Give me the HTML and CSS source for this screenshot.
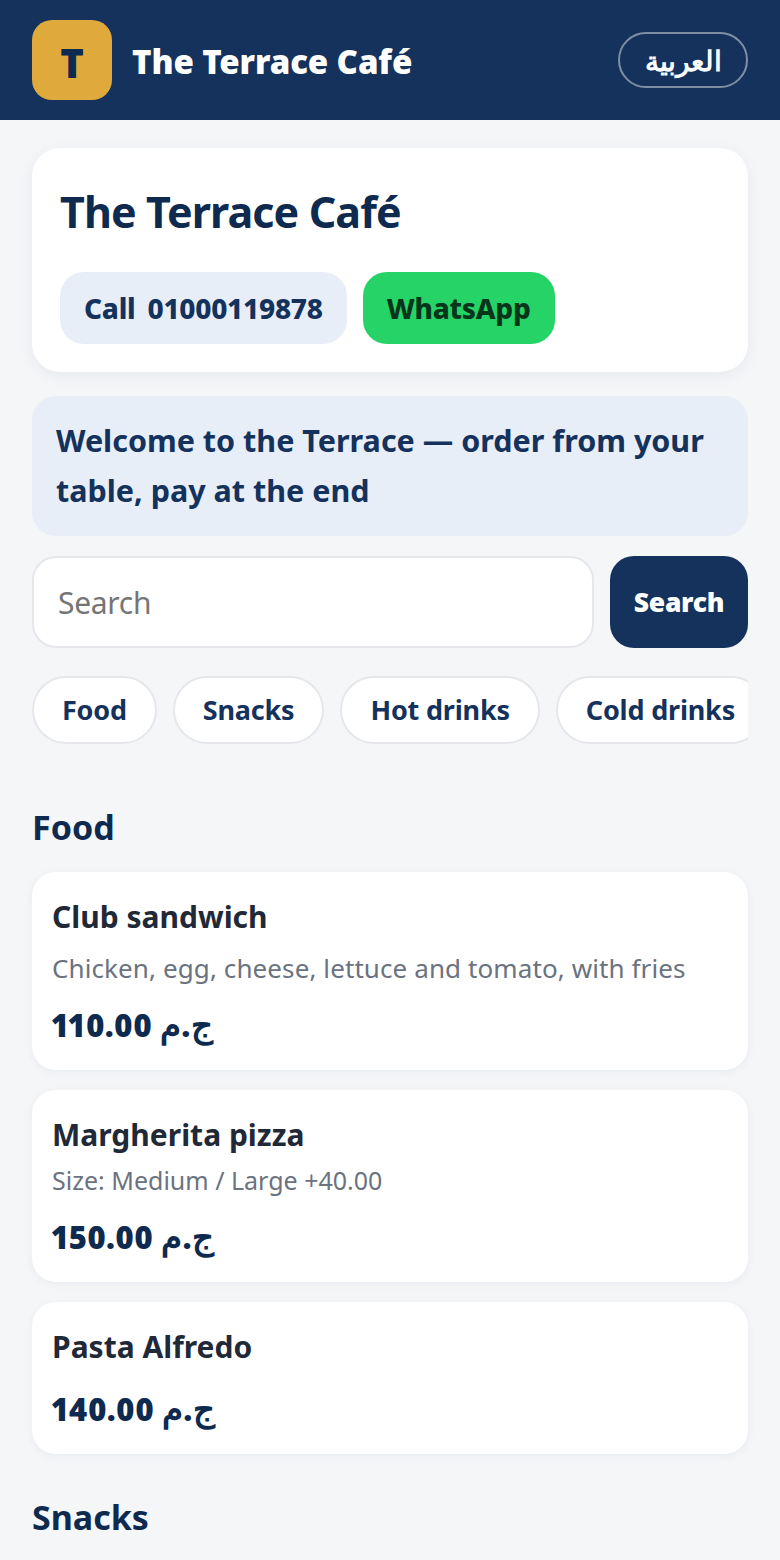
FILE: index.html
```html
<!DOCTYPE html>
<html lang="en">
<head>
  <title>The Terrace Café</title>
  <meta name="viewport" content="width=device-width, initial-scale=1.0">
  <link rel="stylesheet" href="styles.css">
</head>
<body>
  <header class="topbar">
    <div class="brand">
      <div class="logo">T</div>
      <div class="brand-name">The Terrace Café</div>
    </div>
    <a class="lang" href="#">العربية</a>
  </header>

  <main class="page">
    <section class="hero">
      <h1>The Terrace Café</h1>
      <div class="hero-actions">
        <a class="action action-call" href="#"><span>Call</span><span>01000119878</span></a>
        <a class="action action-whatsapp" href="#">WhatsApp</a>
      </div>
    </section>

    <div class="notice">Welcome to the Terrace — order from your table, pay at the end</div>

    <form class="search">
      <input type="text" placeholder="Search">
      <button type="button">Search</button>
    </form>

    <nav class="chips">
      <a class="chip" href="#">Food</a>
      <a class="chip" href="#">Snacks</a>
      <a class="chip" href="#">Hot drinks</a>
      <a class="chip" href="#">Cold drinks</a>
    </nav>

    <h2 class="section-title first">Food</h2>
    <div class="items">
      <article class="item">
        <div class="item-name">Club sandwich</div>
        <div class="item-desc">Chicken, egg, cheese, lettuce and tomato, with fries</div>
        <div class="item-price">110.00 <span class="currency">ج.م</span></div>
      </article>
      <article class="item">
        <div class="item-name">Margherita pizza</div>
        <div class="item-size">Size: Medium / Large +40.00</div>
        <div class="item-price">150.00 <span class="currency">ج.م</span></div>
      </article>
      <article class="item">
        <div class="item-name">Pasta Alfredo</div>
        <div class="item-price">140.00 <span class="currency">ج.م</span></div>
      </article>
    </div>

    <h2 class="section-title">Snacks</h2>
  </main>
</body>
</html>
```

FILE: styles.css
```css
* {
  box-sizing: border-box;
}
html, body {
  height: 1560px;
  overflow: hidden;
}
body {
  margin: 0;
  background: #f4f6f8;
  font-family: "Noto Sans", "Open Sans", sans-serif;
  color: #1f2937;
}
a {
  text-decoration: none;
}
.topbar {
  height: 120px;
  padding: 0 32px;
  background: #14325c;
  display: flex;
  align-items: center;
  justify-content: space-between;
}
.brand {
  display: flex;
  align-items: center;
  gap: 20px;
}
.logo {
  width: 80px;
  height: 80px;
  padding-top: 4px;
  border-radius: 20px;
  background: #e0a93b;
  color: #0f2a4f;
  font-size: 40px;
  font-weight: 900;
  display: flex;
  align-items: center;
  justify-content: center;
}
.brand-name {
  padding-top: 2px;
  color: #fff;
  font-size: 33px;
  font-weight: 900;
  letter-spacing: -0.1px;
}
.lang {
  width: 130px;
  height: 56px;
  border: 2px solid rgba(255,255,255,0.45);
  border-radius: 28px;
  color: #fff;
  font-size: 28px;
  font-weight: 600;
  display: flex;
  align-items: center;
  justify-content: center;
}
.page {
  padding: 28px 32px 0;
}
.hero {
  height: 224px;
  padding: 28px;
  background: #fff;
  border-radius: 28px;
  box-shadow: 0 4px 16px rgba(15,42,79,0.06);
}
.hero h1 {
  margin: 0;
  height: 96px;
  line-height: 72px;
  font-size: 43px;
  font-weight: 700;
  letter-spacing: -0.9px;
  color: #0f2a4f;
}
.hero-actions {
  display: flex;
  gap: 16px;
}
.action {
  height: 72px;
  padding: 0 24px;
  border-radius: 24px;
  font-size: 28px;
  font-weight: 800;
  letter-spacing: -0.25px;
  display: flex;
  align-items: center;
  gap: 12px;
}
.action-call {
  background: #e8eef7;
  color: #14325c;
}
.action-whatsapp {
  background: #25d366;
  color: #06351b;
}
.notice {
  margin-top: 24px;
  padding: 19px 24px;
  height: 140px;
  border-radius: 24px;
  background: #e8eef7;
  color: #14325c;
  font-size: 30.5px;
  font-weight: 700;
  line-height: 50px;
}
.search {
  margin-top: 20px;
  display: flex;
  gap: 16px;
}
.search input {
  flex: 1;
  min-width: 0;
  height: 92px;
  padding: 0 24px;
  border: 2px solid #e5e7eb;
  border-radius: 24px;
  background: #fff;
  font-family: inherit;
  font-size: 30px;
  letter-spacing: -0.3px;
  outline: none;
}
.search button {
  width: 138px;
  height: 92px;
  border: none;
  border-radius: 24px;
  background: #14325c;
  color: #fff;
  font-family: inherit;
  font-size: 26.5px;
  font-weight: 900;
  letter-spacing: -0.3px;
}
.chips {
  margin-top: 28px;
  display: flex;
  gap: 16px;
  overflow: hidden;
}
.chip {
  flex: none;
  height: 68px;
  padding: 0 28px 2px;
  border: 2px solid #e5e7eb;
  border-radius: 34px;
  background: #fff;
  color: #14325c;
  font-size: 27px;
  font-weight: 700;
  letter-spacing: -0.2px;
  display: flex;
  align-items: center;
}
.section-title {
  margin: 40px 0 22px;
  font-size: 34px;
  font-weight: 700;
  line-height: 46px;
  color: #0f2a4f;
}
.section-title.first {
  margin-top: 60px;
}
.items {
  display: flex;
  flex-direction: column;
  gap: 20px;
}
.item {
  padding: 20px;
  background: #fff;
  border-radius: 24px;
  box-shadow: 0 2px 10px rgba(15,42,79,0.05);
}
.item-name {
  padding-bottom: 1px;
  font-size: 30px;
  font-weight: 700;
  line-height: 49px;
  color: #1f2937;
}
.item-desc {
  margin-top: 6px;
  font-size: 26px;
  letter-spacing: 0.1px;
  line-height: 40px;
  color: #6b7280;
}
.item-size {
  font-size: 25px;
  line-height: 40px;
  color: #6b7280;
}
.item-price {
  margin-top: 14px;
  padding-bottom: 1px;
  font-size: 31px;
  font-weight: 900;
  font-variant-numeric: proportional-nums;
  line-height: 47px;
  color: #0f2a4f;
}
.currency {
  font-size: 34px;
  font-weight: 800;
  line-height: 1;
}
```
